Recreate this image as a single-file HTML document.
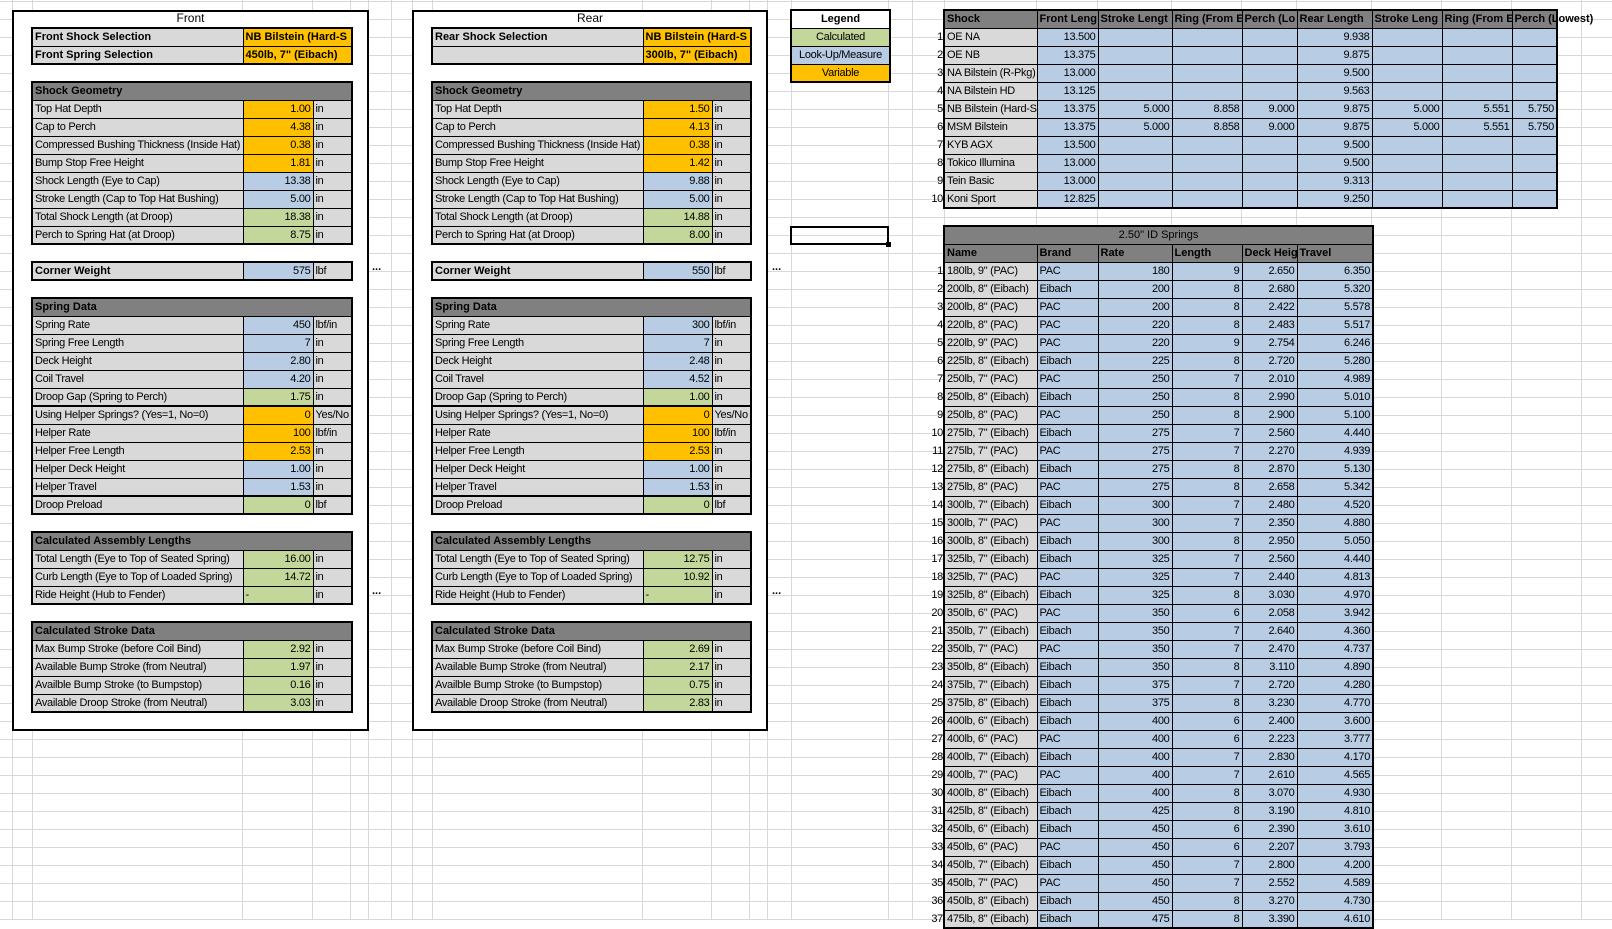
<!DOCTYPE html>
<html><head><meta charset="utf-8"><style>
*{box-sizing:border-box}
body{margin:0;width:1612px;height:920px;overflow:hidden;background:#fff;position:relative;font-family:"Liberation Sans",sans-serif;font-size:11px;color:#000}
.hg{position:absolute;left:0;top:0;width:1612px;height:920px;background:repeating-linear-gradient(to bottom,transparent 0,transparent 9px,#d8d8d8 9px,#d8d8d8 10px,transparent 10px,transparent 18px);background-size:100% 18px;background-position:0 10px}
.v{position:absolute;top:0;width:1px;height:920px;background:#d8d8d8}
.box{position:absolute;border:2px solid #000;background:#fff}
.ttl{position:absolute;font-size:12px;text-align:center}
table{position:absolute;border-collapse:collapse;table-layout:fixed;border:2px solid #000;font-size:11px;letter-spacing:-0.3px}
tr{height:18px}
td{border:1px solid #000;padding:0 2px;white-space:nowrap;overflow:hidden;line-height:16px;height:18px}
.l{background:#d9d9d9}
.o{background:#ffc000}
.b{background:#b8cce4}
.g{background:#c4d79b}
.h{background:#808080;font-weight:bold;letter-spacing:0}
.r{text-align:right}
.bb{font-weight:bold;letter-spacing:0}
.c{text-align:center}
.tk td{border-top:2px solid #000}
.dots{position:absolute;font-weight:bold;font-size:11px}
.num{position:absolute;left:912px;width:31px;text-align:right;font-size:11px;letter-spacing:-0.3px;line-height:18px}
</style></head><body>
<div class="hg"></div>
<div class="v" style="left:12px"></div><div class="v" style="left:32px"></div><div class="v" style="left:242px"></div><div class="v" style="left:312px"></div><div class="v" style="left:350px"></div><div class="v" style="left:368px"></div><div class="v" style="left:391px"></div><div class="v" style="left:412px"></div><div class="v" style="left:432px"></div><div class="v" style="left:642px"></div><div class="v" style="left:711px"></div><div class="v" style="left:749px"></div><div class="v" style="left:767px"></div><div class="v" style="left:791px"></div><div class="v" style="left:888px"></div><div class="v" style="left:912px"></div><div class="v" style="left:944px"></div><div class="v" style="left:1036px"></div><div class="v" style="left:1097px"></div><div class="v" style="left:1171px"></div><div class="v" style="left:1241px"></div><div class="v" style="left:1296px"></div><div class="v" style="left:1371px"></div><div class="v" style="left:1441px"></div><div class="v" style="left:1511px"></div><div class="v" style="left:1581px"></div>

<!-- FRONT -->
<div class="box" style="left:12px;top:10px;width:357px;height:721px"></div>
<div class="ttl" style="left:12px;top:11px;width:357px">Front</div>
<table style="left:31px;top:27px;width:320px"><col style="width:211px"><col style="width:109px">
<tr><td class="l bb">Front Shock Selection</td><td class="o bb">NB Bilstein (Hard-S</td></tr>
<tr><td class="l bb">Front Spring Selection</td><td class="o bb">450lb, 7" (Eibach)</td></tr></table>
<table style="left:31px;top:81px;width:320px"><col style="width:211px"><col style="width:70px"><col style="width:39px">
<tr><td class="h" colspan="3">Shock Geometry</td></tr>
<tr><td class="l">Top Hat Depth</td><td class="o r">1.00</td><td class="l">in</td></tr>
<tr><td class="l">Cap to Perch</td><td class="o r">4.38</td><td class="l">in</td></tr>
<tr><td class="l">Compressed Bushing Thickness (Inside Hat)</td><td class="o r">0.38</td><td class="l">in</td></tr>
<tr><td class="l">Bump Stop Free Height</td><td class="o r">1.81</td><td class="l">in</td></tr>
<tr><td class="l">Shock Length (Eye to Cap)</td><td class="b r">13.38</td><td class="l">in</td></tr>
<tr><td class="l">Stroke Length (Cap to Top Hat Bushing)</td><td class="b r">5.00</td><td class="l">in</td></tr>
<tr><td class="l">Total Shock Length (at Droop)</td><td class="g r">18.38</td><td class="l">in</td></tr>
<tr><td class="l">Perch to Spring Hat (at Droop)</td><td class="g r">8.75</td><td class="l">in</td></tr></table>
<table style="left:31px;top:261px;width:320px"><col style="width:211px"><col style="width:70px"><col style="width:39px">
<tr><td class="l bb">Corner Weight</td><td class="b r">575</td><td class="l">lbf</td></tr></table>
<table style="left:31px;top:297px;width:320px"><col style="width:211px"><col style="width:70px"><col style="width:39px">
<tr><td class="h" colspan="3">Spring Data</td></tr>
<tr><td class="l">Spring Rate</td><td class="b r">450</td><td class="l">lbf/in</td></tr>
<tr><td class="l">Spring Free Length</td><td class="b r">7</td><td class="l">in</td></tr>
<tr><td class="l">Deck Height</td><td class="b r">2.80</td><td class="l">in</td></tr>
<tr><td class="l">Coil Travel</td><td class="b r">4.20</td><td class="l">in</td></tr>
<tr><td class="l">Droop Gap (Spring to Perch)</td><td class="g r">1.75</td><td class="l">in</td></tr>
<tr class="tk"><td class="l">Using Helper Springs? (Yes=1, No=0)</td><td class="o r">0</td><td class="l">Yes/No</td></tr>
<tr><td class="l">Helper Rate</td><td class="o r">100</td><td class="l">lbf/in</td></tr>
<tr><td class="l">Helper Free Length</td><td class="o r">2.53</td><td class="l">in</td></tr>
<tr><td class="l">Helper Deck Height</td><td class="b r">1.00</td><td class="l">in</td></tr>
<tr><td class="l">Helper Travel</td><td class="b r">1.53</td><td class="l">in</td></tr>
<tr class="tk"><td class="l">Droop Preload</td><td class="g r">0</td><td class="l">lbf</td></tr></table>
<table style="left:31px;top:531px;width:320px"><col style="width:211px"><col style="width:70px"><col style="width:39px">
<tr><td class="h" colspan="3">Calculated Assembly Lengths</td></tr>
<tr><td class="l">Total Length (Eye to Top of Seated Spring)</td><td class="g r">16.00</td><td class="l">in</td></tr>
<tr><td class="l">Curb Length (Eye to Top of Loaded Spring)</td><td class="g r">14.72</td><td class="l">in</td></tr>
<tr><td class="l">Ride Height (Hub to Fender)</td><td class="g">-</td><td class="l">in</td></tr></table>
<table style="left:31px;top:621px;width:320px"><col style="width:211px"><col style="width:70px"><col style="width:39px">
<tr><td class="h" colspan="3">Calculated Stroke Data</td></tr>
<tr><td class="l">Max Bump Stroke (before Coil Bind)</td><td class="g r">2.92</td><td class="l">in</td></tr>
<tr><td class="l">Available Bump Stroke (from Neutral)</td><td class="g r">1.97</td><td class="l">in</td></tr>
<tr><td class="l">Availble Bump Stroke (to Bumpstop)</td><td class="g r">0.16</td><td class="l">in</td></tr>
<tr><td class="l">Available Droop Stroke (from Neutral)</td><td class="g r">3.03</td><td class="l">in</td></tr></table>
<div class="dots" style="left:372px;top:261px">...</div>
<div class="dots" style="left:372px;top:585px">...</div>

<!-- REAR -->
<div class="box" style="left:412px;top:10px;width:356px;height:721px"></div>
<div class="ttl" style="left:412px;top:11px;width:356px">Rear</div>
<table style="left:431px;top:27px;width:319px"><col style="width:211px"><col style="width:108px">
<tr><td class="l bb">Rear Shock Selection</td><td class="o bb">NB Bilstein (Hard-S</td></tr>
<tr><td class="l bb"></td><td class="o bb">300lb, 7" (Eibach)</td></tr></table>
<table style="left:431px;top:81px;width:319px"><col style="width:211px"><col style="width:69px"><col style="width:39px">
<tr><td class="h" colspan="3">Shock Geometry</td></tr>
<tr><td class="l">Top Hat Depth</td><td class="o r">1.50</td><td class="l">in</td></tr>
<tr><td class="l">Cap to Perch</td><td class="o r">4.13</td><td class="l">in</td></tr>
<tr><td class="l">Compressed Bushing Thickness (Inside Hat)</td><td class="o r">0.38</td><td class="l">in</td></tr>
<tr><td class="l">Bump Stop Free Height</td><td class="o r">1.42</td><td class="l">in</td></tr>
<tr><td class="l">Shock Length (Eye to Cap)</td><td class="b r">9.88</td><td class="l">in</td></tr>
<tr><td class="l">Stroke Length (Cap to Top Hat Bushing)</td><td class="b r">5.00</td><td class="l">in</td></tr>
<tr><td class="l">Total Shock Length (at Droop)</td><td class="g r">14.88</td><td class="l">in</td></tr>
<tr><td class="l">Perch to Spring Hat (at Droop)</td><td class="g r">8.00</td><td class="l">in</td></tr></table>
<table style="left:431px;top:261px;width:319px"><col style="width:211px"><col style="width:69px"><col style="width:39px">
<tr><td class="l bb">Corner Weight</td><td class="b r">550</td><td class="l">lbf</td></tr></table>
<table style="left:431px;top:297px;width:319px"><col style="width:211px"><col style="width:69px"><col style="width:39px">
<tr><td class="h" colspan="3">Spring Data</td></tr>
<tr><td class="l">Spring Rate</td><td class="b r">300</td><td class="l">lbf/in</td></tr>
<tr><td class="l">Spring Free Length</td><td class="b r">7</td><td class="l">in</td></tr>
<tr><td class="l">Deck Height</td><td class="b r">2.48</td><td class="l">in</td></tr>
<tr><td class="l">Coil Travel</td><td class="b r">4.52</td><td class="l">in</td></tr>
<tr><td class="l">Droop Gap (Spring to Perch)</td><td class="g r">1.00</td><td class="l">in</td></tr>
<tr class="tk"><td class="l">Using Helper Springs? (Yes=1, No=0)</td><td class="o r">0</td><td class="l">Yes/No</td></tr>
<tr><td class="l">Helper Rate</td><td class="o r">100</td><td class="l">lbf/in</td></tr>
<tr><td class="l">Helper Free Length</td><td class="o r">2.53</td><td class="l">in</td></tr>
<tr><td class="l">Helper Deck Height</td><td class="b r">1.00</td><td class="l">in</td></tr>
<tr><td class="l">Helper Travel</td><td class="b r">1.53</td><td class="l">in</td></tr>
<tr class="tk"><td class="l">Droop Preload</td><td class="g r">0</td><td class="l">lbf</td></tr></table>
<table style="left:431px;top:531px;width:319px"><col style="width:211px"><col style="width:69px"><col style="width:39px">
<tr><td class="h" colspan="3">Calculated Assembly Lengths</td></tr>
<tr><td class="l">Total Length (Eye to Top of Seated Spring)</td><td class="g r">12.75</td><td class="l">in</td></tr>
<tr><td class="l">Curb Length (Eye to Top of Loaded Spring)</td><td class="g r">10.92</td><td class="l">in</td></tr>
<tr><td class="l">Ride Height (Hub to Fender)</td><td class="g">-</td><td class="l">in</td></tr></table>
<table style="left:431px;top:621px;width:319px"><col style="width:211px"><col style="width:69px"><col style="width:39px">
<tr><td class="h" colspan="3">Calculated Stroke Data</td></tr>
<tr><td class="l">Max Bump Stroke (before Coil Bind)</td><td class="g r">2.69</td><td class="l">in</td></tr>
<tr><td class="l">Available Bump Stroke (from Neutral)</td><td class="g r">2.17</td><td class="l">in</td></tr>
<tr><td class="l">Availble Bump Stroke (to Bumpstop)</td><td class="g r">0.75</td><td class="l">in</td></tr>
<tr><td class="l">Available Droop Stroke (from Neutral)</td><td class="g r">2.83</td><td class="l">in</td></tr></table>
<div class="dots" style="left:772px;top:261px">...</div>
<div class="dots" style="left:772px;top:585px">...</div>

<!-- LEGEND -->
<table style="left:790px;top:9px;width:99px"><col style="width:99px">
<tr><td class="c bb" style="background:#fff">Legend</td></tr>
<tr><td class="c g">Calculated</td></tr>
<tr><td class="c b">Look-Up/Measure</td></tr>
<tr><td class="c o">Variable</td></tr></table>
<div style="position:absolute;left:790px;top:226px;width:99px;height:19px;border:2px solid #000"></div>
<div style="position:absolute;left:886px;top:242px;width:5px;height:5px;background:#000"></div>

<!-- SHOCK TABLE -->
<table style="left:943px;top:9px;width:613px"><col style="width:93px"><col style="width:61px"><col style="width:74px"><col style="width:70px"><col style="width:55px"><col style="width:75px"><col style="width:70px"><col style="width:70px"><col style="width:45px">
<tr class="h"><td>Shock</td><td>Front Leng</td><td>Stroke Lengt</td><td>Ring (From E</td><td>Perch (Lo</td><td>Rear Length</td><td>Stroke Leng</td><td>Ring (From E</td><td style="overflow:visible">Perch (Lowest)</td></tr>
<tr><td class="l">OE NA</td><td class="b r">13.500</td><td class="b"></td><td class="b"></td><td class="b"></td><td class="b r">9.938</td><td class="b"></td><td class="b"></td><td class="b"></td></tr>
<tr><td class="l">OE NB</td><td class="b r">13.375</td><td class="b"></td><td class="b"></td><td class="b"></td><td class="b r">9.875</td><td class="b"></td><td class="b"></td><td class="b"></td></tr>
<tr><td class="l">NA Bilstein (R-Pkg)</td><td class="b r">13.000</td><td class="b"></td><td class="b"></td><td class="b"></td><td class="b r">9.500</td><td class="b"></td><td class="b"></td><td class="b"></td></tr>
<tr><td class="l">NA Bilstein HD</td><td class="b r">13.125</td><td class="b"></td><td class="b"></td><td class="b"></td><td class="b r">9.563</td><td class="b"></td><td class="b"></td><td class="b"></td></tr>
<tr><td class="l">NB Bilstein (Hard-S</td><td class="b r">13.375</td><td class="b r">5.000</td><td class="b r">8.858</td><td class="b r">9.000</td><td class="b r">9.875</td><td class="b r">5.000</td><td class="b r">5.551</td><td class="b r">5.750</td></tr>
<tr><td class="l">MSM Bilstein</td><td class="b r">13.375</td><td class="b r">5.000</td><td class="b r">8.858</td><td class="b r">9.000</td><td class="b r">9.875</td><td class="b r">5.000</td><td class="b r">5.551</td><td class="b r">5.750</td></tr>
<tr><td class="l">KYB AGX</td><td class="b r">13.500</td><td class="b"></td><td class="b"></td><td class="b"></td><td class="b r">9.500</td><td class="b"></td><td class="b"></td><td class="b"></td></tr>
<tr><td class="l">Tokico Illumina</td><td class="b r">13.000</td><td class="b"></td><td class="b"></td><td class="b"></td><td class="b r">9.500</td><td class="b"></td><td class="b"></td><td class="b"></td></tr>
<tr><td class="l">Tein Basic</td><td class="b r">13.000</td><td class="b"></td><td class="b"></td><td class="b"></td><td class="b r">9.313</td><td class="b"></td><td class="b"></td><td class="b"></td></tr>
<tr><td class="l">Koni Sport</td><td class="b r">12.825</td><td class="b"></td><td class="b"></td><td class="b"></td><td class="b r">9.250</td><td class="b"></td><td class="b"></td><td class="b"></td></tr></table>
<div class="num" style="top:28px">1</div><div class="num" style="top:46px">2</div><div class="num" style="top:64px">3</div><div class="num" style="top:82px">4</div><div class="num" style="top:100px">5</div><div class="num" style="top:118px">6</div><div class="num" style="top:136px">7</div><div class="num" style="top:154px">8</div><div class="num" style="top:172px">9</div><div class="num" style="top:190px">10</div>

<!-- SPRINGS -->
<table style="left:943px;top:225px;width:429px"><col style="width:93px"><col style="width:61px"><col style="width:74px"><col style="width:70px"><col style="width:55px"><col style="width:76px">
<tr><td class="h c" colspan="6" style="font-weight:normal">2.50" ID Springs</td></tr>
<tr class="h"><td>Name</td><td>Brand</td><td>Rate</td><td>Length</td><td>Deck Heig</td><td>Travel</td></tr>
<tr><td class="l">180lb, 9" (PAC)</td><td class="b">PAC</td><td class="b r">180</td><td class="b r">9</td><td class="b r">2.650</td><td class="b r">6.350</td></tr>
<tr><td class="l">200lb, 8" (Eibach)</td><td class="b">Eibach</td><td class="b r">200</td><td class="b r">8</td><td class="b r">2.680</td><td class="b r">5.320</td></tr>
<tr><td class="l">200lb, 8" (PAC)</td><td class="b">PAC</td><td class="b r">200</td><td class="b r">8</td><td class="b r">2.422</td><td class="b r">5.578</td></tr>
<tr><td class="l">220lb, 8" (PAC)</td><td class="b">PAC</td><td class="b r">220</td><td class="b r">8</td><td class="b r">2.483</td><td class="b r">5.517</td></tr>
<tr><td class="l">220lb, 9" (PAC)</td><td class="b">PAC</td><td class="b r">220</td><td class="b r">9</td><td class="b r">2.754</td><td class="b r">6.246</td></tr>
<tr><td class="l">225lb, 8" (Eibach)</td><td class="b">Eibach</td><td class="b r">225</td><td class="b r">8</td><td class="b r">2.720</td><td class="b r">5.280</td></tr>
<tr><td class="l">250lb, 7" (PAC)</td><td class="b">PAC</td><td class="b r">250</td><td class="b r">7</td><td class="b r">2.010</td><td class="b r">4.989</td></tr>
<tr><td class="l">250lb, 8" (Eibach)</td><td class="b">Eibach</td><td class="b r">250</td><td class="b r">8</td><td class="b r">2.990</td><td class="b r">5.010</td></tr>
<tr><td class="l">250lb, 8" (PAC)</td><td class="b">PAC</td><td class="b r">250</td><td class="b r">8</td><td class="b r">2.900</td><td class="b r">5.100</td></tr>
<tr><td class="l">275lb, 7" (Eibach)</td><td class="b">Eibach</td><td class="b r">275</td><td class="b r">7</td><td class="b r">2.560</td><td class="b r">4.440</td></tr>
<tr><td class="l">275lb, 7" (PAC)</td><td class="b">PAC</td><td class="b r">275</td><td class="b r">7</td><td class="b r">2.270</td><td class="b r">4.939</td></tr>
<tr><td class="l">275lb, 8" (Eibach)</td><td class="b">Eibach</td><td class="b r">275</td><td class="b r">8</td><td class="b r">2.870</td><td class="b r">5.130</td></tr>
<tr><td class="l">275lb, 8" (PAC)</td><td class="b">PAC</td><td class="b r">275</td><td class="b r">8</td><td class="b r">2.658</td><td class="b r">5.342</td></tr>
<tr><td class="l">300lb, 7" (Eibach)</td><td class="b">Eibach</td><td class="b r">300</td><td class="b r">7</td><td class="b r">2.480</td><td class="b r">4.520</td></tr>
<tr><td class="l">300lb, 7" (PAC)</td><td class="b">PAC</td><td class="b r">300</td><td class="b r">7</td><td class="b r">2.350</td><td class="b r">4.880</td></tr>
<tr><td class="l">300lb, 8" (Eibach)</td><td class="b">Eibach</td><td class="b r">300</td><td class="b r">8</td><td class="b r">2.950</td><td class="b r">5.050</td></tr>
<tr><td class="l">325lb, 7" (Eibach)</td><td class="b">Eibach</td><td class="b r">325</td><td class="b r">7</td><td class="b r">2.560</td><td class="b r">4.440</td></tr>
<tr><td class="l">325lb, 7" (PAC)</td><td class="b">PAC</td><td class="b r">325</td><td class="b r">7</td><td class="b r">2.440</td><td class="b r">4.813</td></tr>
<tr><td class="l">325lb, 8" (Eibach)</td><td class="b">Eibach</td><td class="b r">325</td><td class="b r">8</td><td class="b r">3.030</td><td class="b r">4.970</td></tr>
<tr><td class="l">350lb, 6" (PAC)</td><td class="b">PAC</td><td class="b r">350</td><td class="b r">6</td><td class="b r">2.058</td><td class="b r">3.942</td></tr>
<tr><td class="l">350lb, 7" (Eibach)</td><td class="b">Eibach</td><td class="b r">350</td><td class="b r">7</td><td class="b r">2.640</td><td class="b r">4.360</td></tr>
<tr><td class="l">350lb, 7" (PAC)</td><td class="b">PAC</td><td class="b r">350</td><td class="b r">7</td><td class="b r">2.470</td><td class="b r">4.737</td></tr>
<tr><td class="l">350lb, 8" (Eibach)</td><td class="b">Eibach</td><td class="b r">350</td><td class="b r">8</td><td class="b r">3.110</td><td class="b r">4.890</td></tr>
<tr><td class="l">375lb, 7" (Eibach)</td><td class="b">Eibach</td><td class="b r">375</td><td class="b r">7</td><td class="b r">2.720</td><td class="b r">4.280</td></tr>
<tr><td class="l">375lb, 8" (Eibach)</td><td class="b">Eibach</td><td class="b r">375</td><td class="b r">8</td><td class="b r">3.230</td><td class="b r">4.770</td></tr>
<tr><td class="l">400lb, 6" (Eibach)</td><td class="b">Eibach</td><td class="b r">400</td><td class="b r">6</td><td class="b r">2.400</td><td class="b r">3.600</td></tr>
<tr><td class="l">400lb, 6" (PAC)</td><td class="b">PAC</td><td class="b r">400</td><td class="b r">6</td><td class="b r">2.223</td><td class="b r">3.777</td></tr>
<tr><td class="l">400lb, 7" (Eibach)</td><td class="b">Eibach</td><td class="b r">400</td><td class="b r">7</td><td class="b r">2.830</td><td class="b r">4.170</td></tr>
<tr><td class="l">400lb, 7" (PAC)</td><td class="b">PAC</td><td class="b r">400</td><td class="b r">7</td><td class="b r">2.610</td><td class="b r">4.565</td></tr>
<tr><td class="l">400lb, 8" (Eibach)</td><td class="b">Eibach</td><td class="b r">400</td><td class="b r">8</td><td class="b r">3.070</td><td class="b r">4.930</td></tr>
<tr><td class="l">425lb, 8" (Eibach)</td><td class="b">Eibach</td><td class="b r">425</td><td class="b r">8</td><td class="b r">3.190</td><td class="b r">4.810</td></tr>
<tr><td class="l">450lb, 6" (Eibach)</td><td class="b">Eibach</td><td class="b r">450</td><td class="b r">6</td><td class="b r">2.390</td><td class="b r">3.610</td></tr>
<tr><td class="l">450lb, 6" (PAC)</td><td class="b">PAC</td><td class="b r">450</td><td class="b r">6</td><td class="b r">2.207</td><td class="b r">3.793</td></tr>
<tr><td class="l">450lb, 7" (Eibach)</td><td class="b">Eibach</td><td class="b r">450</td><td class="b r">7</td><td class="b r">2.800</td><td class="b r">4.200</td></tr>
<tr><td class="l">450lb, 7" (PAC)</td><td class="b">PAC</td><td class="b r">450</td><td class="b r">7</td><td class="b r">2.552</td><td class="b r">4.589</td></tr>
<tr><td class="l">450lb, 8" (Eibach)</td><td class="b">Eibach</td><td class="b r">450</td><td class="b r">8</td><td class="b r">3.270</td><td class="b r">4.730</td></tr>
<tr><td class="l">475lb, 8" (Eibach)</td><td class="b">Eibach</td><td class="b r">475</td><td class="b r">8</td><td class="b r">3.390</td><td class="b r">4.610</td></tr></table>
<div class="num" style="top:262px">1</div><div class="num" style="top:280px">2</div><div class="num" style="top:298px">3</div><div class="num" style="top:316px">4</div><div class="num" style="top:334px">5</div><div class="num" style="top:352px">6</div><div class="num" style="top:370px">7</div><div class="num" style="top:388px">8</div><div class="num" style="top:406px">9</div><div class="num" style="top:424px">10</div><div class="num" style="top:442px">11</div><div class="num" style="top:460px">12</div><div class="num" style="top:478px">13</div><div class="num" style="top:496px">14</div><div class="num" style="top:514px">15</div><div class="num" style="top:532px">16</div><div class="num" style="top:550px">17</div><div class="num" style="top:568px">18</div><div class="num" style="top:586px">19</div><div class="num" style="top:604px">20</div><div class="num" style="top:622px">21</div><div class="num" style="top:640px">22</div><div class="num" style="top:658px">23</div><div class="num" style="top:676px">24</div><div class="num" style="top:694px">25</div><div class="num" style="top:712px">26</div><div class="num" style="top:730px">27</div><div class="num" style="top:748px">28</div><div class="num" style="top:766px">29</div><div class="num" style="top:784px">30</div><div class="num" style="top:802px">31</div><div class="num" style="top:820px">32</div><div class="num" style="top:838px">33</div><div class="num" style="top:856px">34</div><div class="num" style="top:874px">35</div><div class="num" style="top:892px">36</div><div class="num" style="top:910px">37</div>
</body></html>
